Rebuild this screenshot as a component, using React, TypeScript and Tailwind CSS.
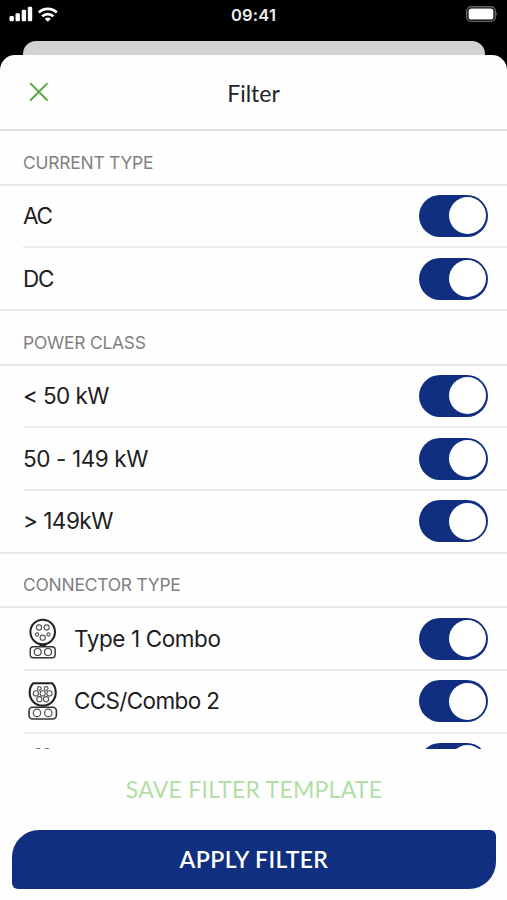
import type { ReactNode } from "react";

function Toggle() {
    return (
        <div className="flex h-[42px] w-[69px] shrink-0 items-center justify-end rounded-full bg-[#102f80] pr-[2.3px]">
            <div className="size-[37px] rounded-full bg-white" />
        </div>
    );
}

function Row({ label, icon, tracking, last }: { label?: string; icon?: ReactNode; tracking?: string; last?: boolean }) {
    return (
        <div className={last ? "" : "pl-[23px]"}>
            <div
                className={
                    last
                        ? "flex h-[62.7px] items-center border-b-2 border-[#e6e7e7] pl-[23px] pr-[19px]"
                        : "flex h-[62.7px] items-center border-b-2 border-[#ececec] pr-[19px]"
                }
            >
                {icon && <div className="w-[51px] shrink-0">{icon}</div>}
                <div className={`flex-1 whitespace-nowrap text-[22.5px] text-[#1d1d1f] ${tracking}`}>{label}</div>
                <Toggle />
            </div>
        </div>
    );
}

function SectionTitle({ title }: { title: string }) {
    return (
        <div className="flex h-[54.6px] items-end border-b-2 border-[#e6e7e7] pb-[8px] pl-[23px]">
            <h2 className="text-[17.4px] leading-[26px] tracking-[-0.2px] text-[#808082]">{title}</h2>
        </div>
    );
}

function TypeOneIcon() {
    return (
        <svg width="40" height="42" viewBox="0 0 40 42" fill="none" stroke="#222">
            <circle cx="19.7" cy="14" r="12.3" strokeWidth="2" />
            <g stroke="#555" strokeWidth="1.1">
                <circle cx="16" cy="9.5" r="2.6" />
                <circle cx="23.6" cy="9.5" r="2.6" />
                <circle cx="14" cy="16.5" r="1.6" />
                <circle cx="25.4" cy="16.5" r="1.6" />
                <circle cx="19.7" cy="19.7" r="2.6" />
            </g>
            <path d="M16.5 27.3h6.5" strokeWidth="2.4" />
            <rect x="7.2" y="28.7" width="25" height="11" rx="3.2" stroke="#333" strokeWidth="1.4" />
            <g stroke="#444" strokeWidth="1.2">
                <circle cx="14.7" cy="34" r="3.5" />
                <circle cx="25" cy="34" r="3.5" />
            </g>
        </svg>
    );
}

function ComboTwoIcon() {
    return (
        <svg width="40" height="42" viewBox="0 0 40 42" fill="none" stroke="#222">
            <path
                d="M10.2 3.3H29.2C31.5 5.6 32.7 9 32.7 12.7C32.7 20 27 25.6 19.7 25.6S6.7 20 6.7 12.7C6.7 9 7.9 5.6 10.2 3.3Z"
                strokeWidth="2.1"
                strokeLinejoin="round"
            />
            <g stroke="#555" strokeWidth="1.1">
                <circle cx="16.3" cy="8.5" r="1.9" />
                <circle cx="23.1" cy="8.5" r="1.9" />
                <circle cx="12.9" cy="13.4" r="2.6" />
                <circle cx="19.7" cy="13.4" r="2.6" />
                <circle cx="26.5" cy="13.4" r="2.6" />
                <circle cx="16.3" cy="19.2" r="2.6" />
                <circle cx="23.1" cy="19.2" r="2.6" />
            </g>
            <rect x="6" y="27.3" width="27.4" height="11.7" rx="3.7" stroke="#333" strokeWidth="1.6" />
            <g stroke="#555" strokeWidth="1.2">
                <circle cx="14" cy="32.9" r="3.7" />
                <circle cx="25.3" cy="32.9" r="3.7" />
            </g>
        </svg>
    );
}

function TypeTwoIcon() {
    return (
        <svg width="40" height="42" viewBox="0 0 40 42" fill="none" stroke="#222">
            <path d="M12.6 6.6q2.6-1.4 5 0M21.4 6.6q2.6-1.4 5 0" strokeWidth="1.4" />
        </svg>
    );
}

function StatusBar() {
    return (
        <div className="grid h-[41px] grid-cols-3 px-[9px] pt-[6px]">
            <svg width="52" height="18" viewBox="0 0 52 18" fill="white">
                <rect x="0.5" y="10" width="4.4" height="5.3" rx="1.2" />
                <rect x="6.5" y="7.3" width="4.4" height="8" rx="1.2" />
                <rect x="12.7" y="3.7" width="4.4" height="11.6" rx="1.2" />
                <rect x="18.8" y="0.7" width="4.4" height="14.6" rx="1.2" />
                <g fill="none" stroke="white" strokeWidth="2.8">
                    <path d="M29.8 6.4a13.2 13.2 0 0 1 18 0" />
                    <path d="M33.2 10.2a8.3 8.3 0 0 1 11.2 0" />
                </g>
                <path d="M35.7 12.7a4.8 4.8 0 0 1 6.2 0L38.8 15.8Z" />
            </svg>
            <div className="text-center text-[16.5px] font-semibold leading-[18px] tracking-[0.2px] text-[#eee]">09:41</div>
            <svg className="justify-self-end" width="34" height="18" viewBox="0 0 34 18">
                <rect x="2.7" y="0.8" width="28.6" height="14.6" rx="4.4" fill="none" stroke="#666" strokeWidth="1.4" />
                <rect x="4.6" y="2.6" width="24.8" height="11" rx="2.7" fill="white" />
                <path d="M32.3 5.8q1.6 2.3 0 4.6Z" fill="#777" />
            </svg>
        </div>
    );
}

export default function App() {
    return (
        <div className="flex h-[900px] w-[507px] flex-col overflow-hidden bg-black font-['Inter',sans-serif]">
            <StatusBar />
            <div className="mx-[22.5px] h-[14px] shrink-0 rounded-t-[13px] bg-[#d2d2d1]" />
            <main className="flex min-h-0 flex-1 flex-col rounded-t-[15px] bg-[#fefefe]">
                <header className="grid h-[76px] shrink-0 grid-cols-[60px_1fr_60px] items-center border-b-2 border-[#dededf]">
                    <button className="pl-[29px]" aria-label="Close">
                        <svg width="20" height="20" viewBox="0 0 20 20" stroke="#55a83c" strokeWidth="1.9" strokeLinecap="round">
                            <path d="M1.7 1.7 18 18M18 1.7 1.7 18" />
                        </svg>
                    </button>
                    <h1 className="pt-[3px] text-center font-['Lato',sans-serif] text-[23px] text-[#252527]">Filter</h1>
                </header>

                <div className="h-[618px] shrink-0 overflow-hidden">
                    <SectionTitle title="CURRENT TYPE" />
                    <Row label="AC" tracking="tracking-[-1.3px]" />
                    <Row label="DC" tracking="tracking-[-1.3px]" last />
                    <SectionTitle title="POWER CLASS" />
                    <Row label="< 50 kW" tracking="tracking-[-0.6px]" />
                    <Row label="50 - 149 kW" tracking="tracking-[-0.4px]" />
                    <Row label="> 149kW" tracking="tracking-[-0.5px]" last />
                    <SectionTitle title="CONNECTOR TYPE" />
                    <Row label="Type 1 Combo" tracking="tracking-[-0.4px]" icon={<TypeOneIcon />} />
                    <Row label="CCS/Combo 2" tracking="tracking-[-0.65px]" icon={<ComboTwoIcon />} />
                    <Row icon={<TypeTwoIcon />} />
                </div>

                <footer className="flex flex-1 flex-col pl-[12px] pr-[11px] font-['Lato',sans-serif]">
                    <button className="h-[80px] text-center text-[23px] tracking-[0.25px] text-[#b2dea5]">SAVE FILTER TEMPLATE</button>
                    <button className="mt-px h-[59px] rounded-bl-[6px] rounded-br-[27px] rounded-tl-[27px] rounded-tr-[6px] bg-[#102f80] text-[23px] font-semibold tracking-[0.4px] text-white">
                        APPLY FILTER
                    </button>
                </footer>
            </main>
        </div>
    );
}
